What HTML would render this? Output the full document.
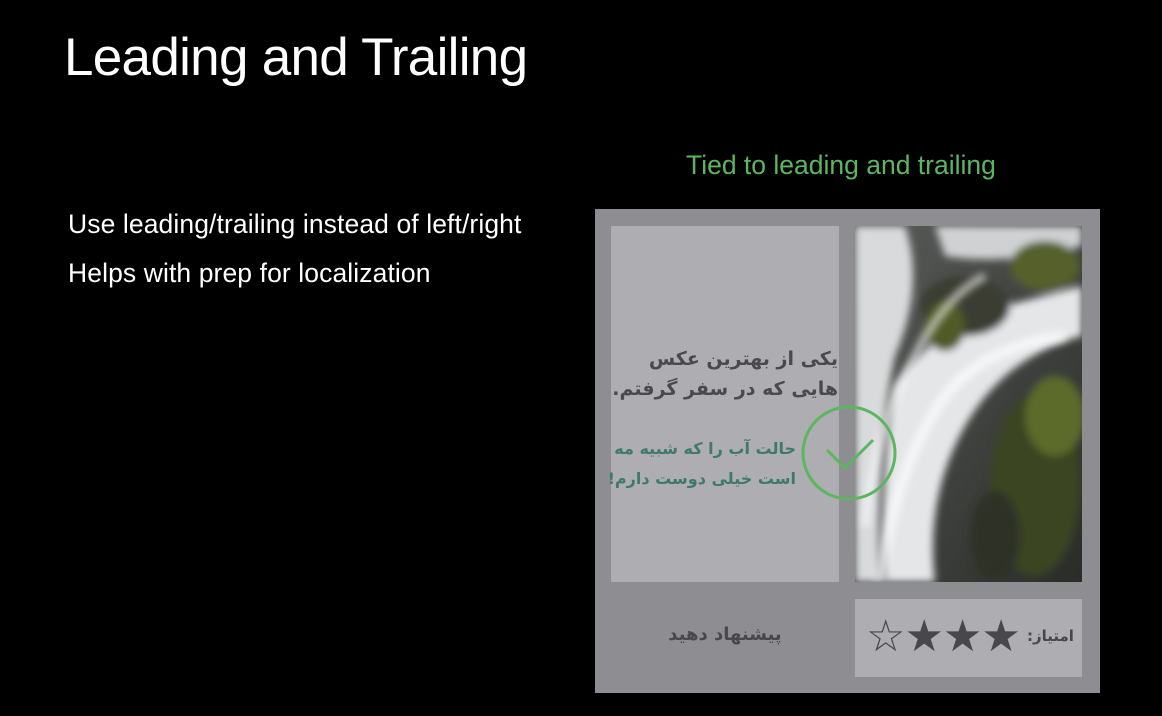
<!DOCTYPE html>
<html><head><meta charset="utf-8"><style>
body{margin:0;width:1162px;height:716px;background:#000;position:relative;overflow:hidden;font-family:"Liberation Sans","DejaVu Sans",sans-serif}
.a{position:absolute}
.fa{font-family:'DejaVu Sans',sans-serif;font-weight:bold;white-space:nowrap}
</style></head><body>
<div class="a" style="left:64px;top:27px;color:#fff;font-size:53px;letter-spacing:-0.7px">Leading and Trailing</div>
<div class="a" style="left:68px;top:200px;color:#fff;font-size:26.5px;line-height:49px;letter-spacing:0.1px">Use leading/trailing instead of left/right<br>Helps with prep for localization</div>
<div class="a" style="left:686px;top:150px;color:#5cb660;font-size:26.5px">Tied to leading and trailing</div>
<div class="a" style="left:595px;top:209px;width:505px;height:484px;background:#8e8d92"></div>
<div class="a" style="left:611px;top:226px;width:228px;height:356px;background:#aeadb2"></div>
<svg class="a" style="left:855px;top:226px" width="227" height="356" viewBox="0 0 227 356">
<defs><linearGradient id="g" x1="0" y1="0" x2="1" y2="1"><stop offset="0" stop-color="#5a5c5a"/><stop offset="1" stop-color="#2a2c28"/></linearGradient>
<filter id="b"><feGaussianBlur stdDeviation="4"/></filter></defs>
<rect width="227" height="356" fill="url(#g)"/>
<g filter="url(#b)">
<path d="M0 0 L50 0 Q70 60 40 130 Q20 220 25 356 L0 356Z" fill="#d8dadc"/>
<path d="M40 160 Q80 100 150 80 L227 60 L227 110 Q150 130 110 200 Q70 270 80 356 L30 356 Q25 240 40 160Z" fill="#e4e6e8"/>
<path d="M80 0 L227 0 L227 20 Q150 40 90 30Z" fill="#cfd1d3"/>
<ellipse cx="110" cy="80" rx="45" ry="30" fill="#3b3d33"/>
<ellipse cx="190" cy="40" rx="35" ry="25" fill="#55602a"/>
<ellipse cx="90" cy="100" rx="20" ry="25" fill="#4f5a28"/>
<ellipse cx="180" cy="260" rx="45" ry="90" fill="#3a4420"/>
<ellipse cx="200" cy="190" rx="30" ry="40" fill="#5b6a2a"/>
<ellipse cx="140" cy="310" rx="25" ry="45" fill="#2e3226"/>
</g>
<path d="M25 356 Q40 240 90 170 Q130 120 210 110" stroke="#fff" stroke-width="10" fill="none" opacity=".7" filter="url(#b)"/>
<path d="M10 300 Q20 200 60 130 Q90 70 130 50" stroke="#fff" stroke-width="8" fill="none" opacity=".6" filter="url(#b)"/>
</svg>
<div class="a fa" dir="rtl" style="right:324px;top:344px;font-size:19px;line-height:30px;color:#4a4a4c;text-align:right">یکی از بهترین عکس<br>هایی که در سفر گرفتم.</div>
<div class="a fa" dir="rtl" style="right:366px;top:434px;font-size:16px;line-height:30px;color:#3e7a6c;text-align:right">حالت آب را که شبیه مه<br>است خیلی دوست دارم!</div>
<svg class="a" style="left:800px;top:405px" width="100" height="100"><circle cx="49" cy="48" r="46" stroke="#5cb660" stroke-width="3" fill="none"/><path d="M27 45 L45 63 L73 35" stroke="#5cb660" stroke-width="3" fill="none"/></svg>
<div class="a fa" dir="rtl" style="left:640px;top:624px;width:170px;font-size:18px;color:#48484a;text-align:center">پیشنهاد دهید</div>
<div class="a" style="left:855px;top:599px;width:227px;height:78px;background:#aeadb2"></div>
<div class="a" style="left:866px;top:614px;font-size:44px;color:#48484a;line-height:46px;letter-spacing:-1px">☆★★★</div>
<div class="a fa" dir="rtl" style="left:1027px;top:627px;font-size:15px;color:#48484a">امتیاز:</div>
</body></html>
